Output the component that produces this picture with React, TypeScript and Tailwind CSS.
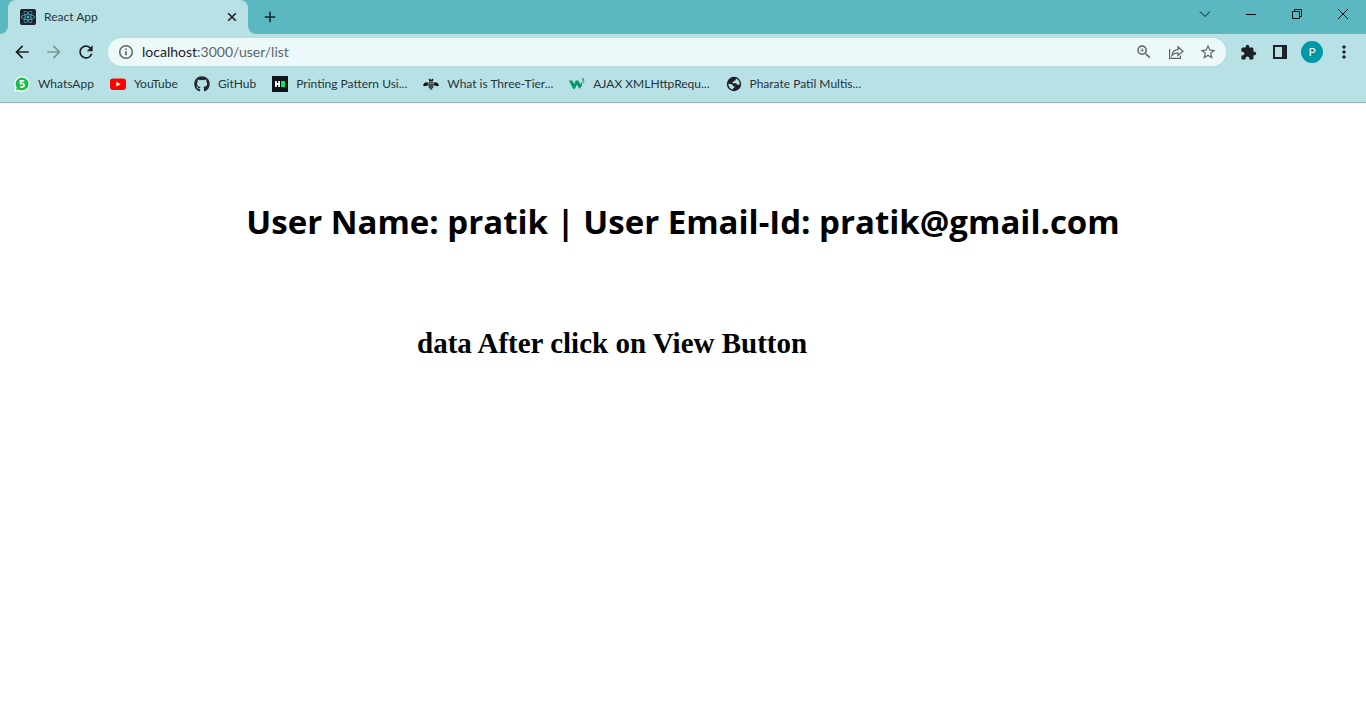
import React from 'react';
import { FaGithub, FaReact } from 'react-icons/fa';
import { MdArrowBack, MdArrowForward, MdRefresh, MdExtension, MdMoreVert, MdZoomIn, MdStarBorder, MdAdd } from 'react-icons/md';

const WhatsAppIcon = () => (
  <svg viewBox="0 0 16 16" className="size-4 shrink-0" aria-hidden="true">
    <path d="M8 .3a7.7 7.7 0 1 1-3.6 14.5L.4 15.7l1-3.8A7.7 7.7 0 0 1 8 .3z" fill="#fff" />
    <path d="M8 1.5a6.5 6.5 0 1 1-3.4 12l-2.7.7.8-2.6A6.5 6.5 0 0 1 8 1.5z" fill="#12c143" />
    <path d="M10.3 4.9H6.5v2.7c2-.5 3.7.2 3.7 1.600 0 1.800-2.500 2.400-4.100 1.400" fill="none" stroke="#fff" strokeWidth="1.700" />
  </svg>
);

const YouTubeIcon = () => (
  <svg viewBox="0 0 16 16" className="size-4 shrink-0" aria-hidden="true">
    <rect y="2.5" width="16" height="11.5" rx="3" fill="#f00" />
    <path d="M6.4 5.8v4.8l4.200-2.400z" fill="#fff" />
  </svg>
);

const GitHubIcon = () => <FaGithub className="size-4 shrink-0 text-[#24292f]" aria-hidden="true" />;

const HackerRankIcon = () => (
  <svg viewBox="0 0 16 16" className="size-4 shrink-0" aria-hidden="true">
    <path d="M0 0h16v16H0z" fill="#0e141e" />
    <path d="M3.900 5v6M7.100 5v6M3.800 8h3.400" stroke="#fff" strokeWidth="1.800" />
    <path d="M9 5h4v6H9z" fill="#00ea64" />
  </svg>
);

const BeeIcon = () => (
  <svg viewBox="0 0 16 16" className="size-4 shrink-0" aria-hidden="true">
    <path d="M5.200 7C3.500 5.500.8 6.500 0 9.500c1.200 1.300 4.200.8 5.200-.700zM10.800 7c1.700-1.500 4.400-.5 5.200 2.500-1.200 1.300-4.200.8-5.200-.700z" fill="#181a1b" />
    <path d="M6 3l1 1.200h2L10 3M6 4.800h4M5.400 6.900h5.200M5.200 9h5.600M5.600 11h4.800M6.700 12.800h2.600" fill="none" stroke="#181a1b" strokeWidth="1.300" />
  </svg>
);

const W3Icon = () => (
  <svg viewBox="0 0 16 16" className="size-4 shrink-0" aria-hidden="true">
    <path d="M0 4.600h3.200l1.900 3.700 1.600-3.700h2.700l1.700 3.600c.8-1 1.200-1.600 2.200-1.500-.2 2.600-1.200 5-3 6L8 8.400l-2 4.400H4z" fill="#059862" />
    <path d="M12.500 2.900h2.500l-1.200 1.500c1.700 0 1.600 2.200-.1 2.100-.6 0-1-.2-1.200-.6" fill="none" stroke="#059862" strokeWidth=".9" />
  </svg>
);

const GlobeIcon = () => (
  <svg viewBox="0 0 16 16" className="size-4 shrink-0" aria-hidden="true">
    <circle cx="8" cy="8" r="7.200" fill="#202124" />
    <path d="M9.800 2.600c.3 1.500-.4 2.100-1.600 2.300-.9.1-.6 1.200-1.600 1.400-.5.2-.3 1 .4 1h2.600c1 0 1.300.9 1.800 1.400h2.200a5.700 5.700 0 0 0-3.800-6.100zM2.400 7.700c0 3.100 2 5.400 4.700 5.900V12c1.100 0 1.600-.6 1.500-1.500H7.300c-.2-1.700-1.400-2.600-3-2.600z" fill="#b8e1e5" />
  </svg>
);

const bookmarks = [
  { label: 'WhatsApp', Icon: WhatsAppIcon },
  { label: 'YouTube', Icon: YouTubeIcon },
  { label: 'GitHub', Icon: GitHubIcon },
  { label: 'Printing Pattern Usi...', Icon: HackerRankIcon },
  { label: 'What is Three-Tier...', Icon: BeeIcon },
  { label: 'AJAX XMLHttpRequ...', Icon: W3Icon },
  { label: 'Pharate Patil Multis...', Icon: GlobeIcon },
];

function IconButton({ label, children }: { label: string; children: React.ReactNode }) {
  return (
    <button type="button" aria-label={label} className="flex h-7 w-8 shrink-0 items-center justify-center">
      {children}
    </button>
  );
}

function WindowButton({ label, path }: { label: string; path: string }) {
  return (
    <button type="button" aria-label={label} className="flex h-7 w-[46px] items-center justify-center">
      <svg viewBox="0 0 12 12" className="size-3" fill="none" stroke="#111">
        <path d={path} />
      </svg>
    </button>
  );
}

function TabStrip() {
  return (
    <div className="flex h-[34px] items-start bg-[#5bb8c1]">
      <div className="h-full w-2 bg-[#b8e1e5]">
        <div className="h-full w-full rounded-br-lg bg-[#5bb8c1]" />
      </div>
      <div className="h-full bg-[#5bb8c1]">
        <div className="flex h-full w-60 items-center rounded-t-lg bg-[#b8e1e5] pl-3 pr-2">
          <span className="flex size-4 items-center justify-center rounded-xs bg-[#20232a]">
            <FaReact className="size-[14px] text-[#4fb3cf]" aria-hidden="true" />
          </span>
          <span className="ml-2 flex-1 text-[12px] leading-4 text-[#26343a]">React App</span>
          <button type="button" aria-label="Close tab" className="flex size-4 items-center justify-center">
            <svg viewBox="0 0 10 10" className="size-[10px]" fill="none" stroke="#202124" strokeWidth="1.600">
              <path d="M1.200 1.200l7.600 7.600M8.800 1.200L1.200 8.800" />
            </svg>
          </button>
        </div>
      </div>
      <div className="h-full w-2 bg-[#b8e1e5]">
        <div className="h-full w-full rounded-bl-lg bg-[#5bb8c1]" />
      </div>
      <button type="button" aria-label="New tab" className="flex h-[34px] w-7 items-center justify-center">
        <MdAdd className="size-[18px]" />
      </button>
      <div className="ml-auto flex">
        <WindowButton label="Search tabs" path="M1 3.500l5 5 5-5" />
        <WindowButton label="Minimize" path="M1 6.500h10" />
        <WindowButton label="Restore" path="M1.500 3.500h7v7h-7zM3.500 3.500v-2h7v7h-2" />
        <WindowButton label="Close" path="M1 1l10 10M11 1L1 11" />
      </div>
    </div>
  );
}

function Toolbar() {
  return (
    <div className="flex items-center px-[6px] pt-1">
      <IconButton label="Back"><MdArrowBack className="size-5" /></IconButton>
      <IconButton label="Forward"><MdArrowForward className="size-5 text-[#7b979b]" /></IconButton>
      <IconButton label="Reload"><MdRefresh className="size-5" /></IconButton>
      <div className="mx-[6px] flex h-7 min-w-0 flex-1 items-center rounded-full bg-[#ecf8f9] pl-[10px] pr-[2px] text-[#5f6368]">
        <svg viewBox="0 0 16 16" className="size-4 shrink-0" fill="none" stroke="currentColor" strokeWidth="1.500" aria-hidden="true">
          <circle cx="8" cy="8" r="6.300" />
          <path d="M8 7.200v4.100M8 4.500v1.600" strokeWidth="1.700" />
        </svg>
        <a href="#address" aria-label="Address" className="ml-2 flex-1 truncate text-[14px] leading-5">
          <span className="text-[#202124]">localhost</span>:3000/user/list
        </a>
        <IconButton label="Zoom"><MdZoomIn className="size-[18px]" /></IconButton>
        <IconButton label="Share">
          <svg viewBox="0 0 16 16" className="size-4" fill="none" stroke="currentColor" strokeWidth="1.200">
            <path d="M1.600 5v9.400h10.800v-2.600M4 11.400c.4-3.600 2.600-5.600 6-5.800V2.800l5 4.400-5 4.300V8.800c-2.700 0-4.500.8-6 2.600z" />
          </svg>
        </IconButton>
        <IconButton label="Bookmark this tab"><MdStarBorder className="size-[18px]" /></IconButton>
      </div>
      <IconButton label="Extensions"><MdExtension className="size-[17px]" /></IconButton>
      <IconButton label="Side panel">
        <svg viewBox="0 0 14 14" className="size-[14px]" fill="currentColor">
          <path d="M0 0h14v14H0zM2 2v10h7V2z" fillRule="evenodd" />
        </svg>
      </IconButton>
      <IconButton label="Profile">
        <span className="flex size-[22px] items-center justify-center rounded-full bg-[#0097a7] text-[12px] leading-4 text-white">P</span>
      </IconButton>
      <IconButton label="Menu"><MdMoreVert className="size-5" /></IconButton>
    </div>
  );
}

export default function App() {
  return (
    <div className="min-h-screen bg-white font-['Open_Sans','Noto_Sans',sans-serif]">
      <header className="font-['Lato','Open_Sans',sans-serif] text-[#202124]">
        <TabStrip />
        <div className="border-b border-[#8fb4b8] bg-[#b8e1e5]">
          <Toolbar />
          <nav aria-label="Bookmarks" className="flex h-9 items-center gap-4 overflow-hidden px-[14px]">
            {bookmarks.map(({ label, Icon }) => (
              <a key={label} href="#bookmark" className="flex shrink-0 items-center gap-2 text-[12px] leading-4 text-[#26343a]">
                <Icon />
                {label}
              </a>
            ))}
          </nav>
        </div>
      </header>
      <main className="px-4 pt-[93px] text-black">
        <h1 className="text-center text-[33px] leading-[52px] font-bold">
          User Name: pratik | User Email-Id: pratik@gmail.com
        </h1>
        <div className="mx-auto mt-[79px] max-w-[532px]">
          <h2 className="font-['Liberation_Serif',serif] text-[29px] leading-8 font-bold">data After click on View Button</h2>
        </div>
      </main>
    </div>
  );
}
